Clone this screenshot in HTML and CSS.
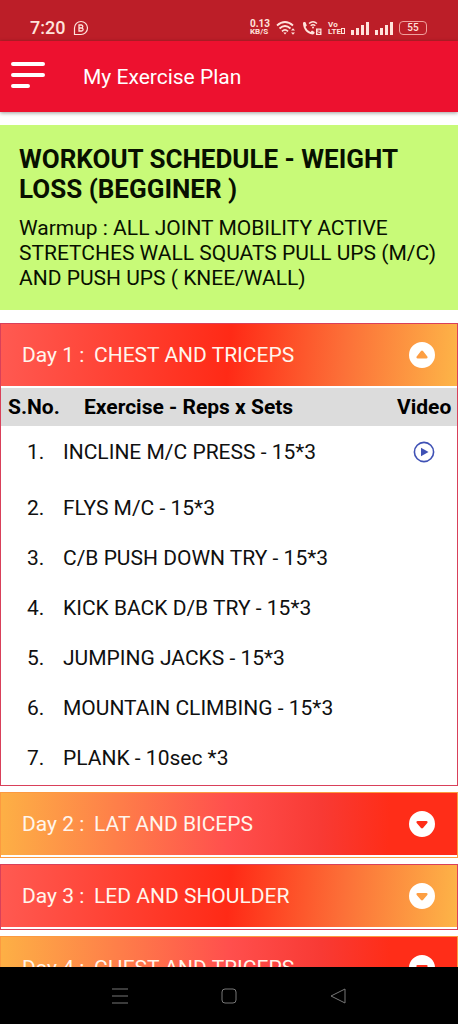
FILE: index.html
```html
<!DOCTYPE html>
<html lang="en">
<head>
    <meta charset="UTF-8">
    <meta name="viewport" content="width=device-width, initial-scale=1.0">
    <title>My Exercise Plan</title>
    <link rel="stylesheet" href="styles.css">
</head>
<body>
    <div class="status-bar">
        <span class="time">7:20</span>
        <svg class="chat-icon" width="16" height="16" viewBox="0 0 16 16" fill="none" stroke="currentColor">
            <path d="M1.5 14.5V8A6.5 6.5 0 1 1 8 14.5Z" stroke-width="1.2"/>
            <path d="M6 5v6h2.600a1.500 1.500 0 0 0 0-3H6h2.300a1.500 1.500 0 0 0 0-3Z" stroke-width="1.300"/>
        </svg>
        <div class="status-right">
            <div class="speed"><span>0.13</span><span>KB/S</span></div>
            <svg width="20" height="16" viewBox="0 0 20 16" fill="none" stroke="currentColor" stroke-width="1.800">
                <path d="M1 5.500Q9 -1.500 17 5.500M3.500 8.500Q9 3.500 14.500 8.500M6 11.300Q9 8.500 12 11.300"/>
                <path d="M7.300 12.600h3.400L9 14.500Z" fill="currentColor" stroke="none"/>
                <path d="M15 10.500l2-2.200 2 2.200ZM15 12.500l2 2.200 2-2.200Z" fill="currentColor" stroke="none"/>
            </svg>
            <svg width="20" height="16" viewBox="0 0 20 16" fill="none" stroke="currentColor">
                <path d="M1 3.500C1 2 2.500 1.800 3.500 2.200L4.800 5.500 3.500 7Q5 10.500 8.500 12L10 10.500 12.500 12C12.800 13.500 12 14.500 10.500 14.500C5 14 1.200 9 1 3.500Z" fill="currentColor" stroke="none"/>
                <path d="M7 3.500Q11 0 15 3.500M8.700 5.800Q11 3.800 13.300 5.800" stroke-width="1.400"/>
                <circle cx="11" cy="7.500" r="1" fill="currentColor" stroke="none"/>
                <path d="M14 8.500h5.500V15H14Z" fill="currentColor" stroke="none"/>
                <path d="M15.500 10.200h2.300v1.600h-2v1.700h2.300" stroke="#bc1e28" stroke-width=".9"/>
            </svg>
            <div class="volte"><span>Vo</span><span>LTE<i></i></span></div>
            <svg class="signal" width="18" height="14" viewBox="0 0 18 14" fill="currentColor">
                <path d="M0 9h3v5H0ZM5 7h3v7H5ZM10 4h3v10h-3ZM15 1h3v13h-3Z"/>
            </svg>
            <svg class="signal" width="18" height="14" viewBox="0 0 18 14" fill="currentColor">
                <path d="M0 9h3v5H0ZM5 7h3v7H5ZM10 4h3v10h-3ZM15 1h3v13h-3Z"/>
            </svg>
            <div class="battery">55</div>
        </div>
    </div>

    <header class="app-bar">
        <button class="menu-button" aria-label="Menu">
            <svg width="34" height="30" viewBox="0 0 34 30" fill="none" stroke="#fff" stroke-width="4" stroke-linecap="round" stroke-linejoin="round">
                <path d="M2 2h30M2 13h30M2 24h15"/>
            </svg>
        </button>
        <h1>My Exercise Plan</h1>
    </header>

    <main class="content">
        <section class="schedule">
            <h2>WORKOUT SCHEDULE - WEIGHT LOSS (BEGGINER )</h2>
            <p>Warmup : ALL JOINT MOBILITY ACTIVE STRETCHES WALL SQUATS PULL UPS (M/C) AND PUSH UPS ( KNEE/WALL)</p>
        </section>

        <section class="day">
            <button class="day-header" aria-expanded="true" aria-controls="day1">
                <span class="day-label">Day 1 :</span>
                <span class="day-name">CHEST AND TRICEPS</span>
                <svg class="arrow" width="26" height="26" viewBox="0 0 26 26" fill="#fff">
                    <path fill-rule="evenodd" d="M13 0a13 13 0 1 1 0 26a13 13 0 1 1 0-26ZM12 9L7.500 14.800Q7 16.500 8.500 16.500H17.500Q19 16.500 18.500 14.800L14 9Q13 8.200 12 9Z"/>
                </svg>
            </button>
            <div class="panel" id="day1">
                <table>
                    <thead>
                        <tr>
                            <th class="number">S.No.</th>
                            <th class="exercise">Exercise - Reps x Sets</th>
                            <th class="video">Video</th>
                        </tr>
                    </thead>
                    <tbody>
                        <tr class="has-video">
                            <td class="number">1.</td>
                            <td>INCLINE M/C PRESS - 15*3</td>
                            <td class="video">
                                <button class="play-button" aria-label="Play video">
                                    <svg width="22" height="22" viewBox="0 0 22 22">
                                        <circle cx="11" cy="11" r="9.600" fill="none" stroke="#3f51b5" stroke-width="1.600"/>
                                        <path d="M8 6.800v8.400L15.500 11Z" fill="#3f51b5"/>
                                    </svg>
                                </button>
                            </td>
                        </tr>
                        <tr><td class="number">2.</td><td>FLYS M/C - 15*3</td><td></td></tr>
                        <tr><td class="number">3.</td><td>C/B PUSH DOWN TRY - 15*3</td><td></td></tr>
                        <tr><td class="number">4.</td><td>KICK BACK D/B TRY - 15*3</td><td></td></tr>
                        <tr><td class="number">5.</td><td>JUMPING JACKS - 15*3</td><td></td></tr>
                        <tr><td class="number">6.</td><td>MOUNTAIN CLIMBING - 15*3</td><td></td></tr>
                        <tr><td class="number">7.</td><td>PLANK - 10sec *3</td><td></td></tr>
                    </tbody>
                </table>
            </div>
        </section>

        <section class="day even">
            <button class="day-header" aria-expanded="false">
                <span class="day-label">Day 2 :</span>
                <span class="day-name">LAT AND BICEPS</span>
                <svg class="arrow" width="26" height="26" viewBox="0 0 26 26" fill="#fff">
                    <path fill-rule="evenodd" d="M13 0a13 13 0 1 1 0 26a13 13 0 1 1 0-26ZM12 17L7.500 11.700Q7 10 8.500 10H17.500Q19 10 18.500 11.700L14 17Q13 17.800 12 17Z"/>
                </svg>
            </button>
        </section>

        <section class="day">
            <button class="day-header" aria-expanded="false">
                <span class="day-label">Day 3 :</span>
                <span class="day-name">LED AND SHOULDER</span>
                <svg class="arrow" width="26" height="26" viewBox="0 0 26 26" fill="#fff">
                    <path fill-rule="evenodd" d="M13 0a13 13 0 1 1 0 26a13 13 0 1 1 0-26ZM12 17L7.500 11.700Q7 10 8.500 10H17.500Q19 10 18.500 11.700L14 17Q13 17.800 12 17Z"/>
                </svg>
            </button>
        </section>

        <section class="day even">
            <button class="day-header" aria-expanded="false">
                <span class="day-label">Day 4 :</span>
                <span class="day-name">CHEST AND TRICEPS</span>
                <svg class="arrow" width="26" height="26" viewBox="0 0 26 26" fill="#fff">
                    <path fill-rule="evenodd" d="M13 0a13 13 0 1 1 0 26a13 13 0 1 1 0-26ZM12 17L7.500 11.700Q7 10 8.500 10H17.500Q19 10 18.500 11.700L14 17Q13 17.800 12 17Z"/>
                </svg>
            </button>
        </section>
    </main>

    <nav class="system-nav">
        <button aria-label="Recent apps">
            <svg width="18" height="18" viewBox="0 0 18 18" fill="none" stroke="currentColor">
                <path d="M1 2h16M1 9h16M1 16h16"/>
            </svg>
        </button>
        <button aria-label="Home">
            <svg width="18" height="18" viewBox="0 0 18 18" fill="none" stroke="currentColor">
                <rect x="2" y="2" width="14" height="14" rx="3"/>
            </svg>
        </button>
        <button aria-label="Back">
            <svg width="18" height="18" viewBox="0 0 18 18" fill="none" stroke="currentColor" stroke-linejoin="round">
                <path d="M16 2v14L2 9Z"/>
            </svg>
        </button>
    </nav>
</body>
</html>
```

FILE: styles.css
```css
/* General styling */
* {
    box-sizing: border-box;
}
body {
    font-family: Roboto, sans-serif;
    display: flex;
    flex-direction: column;
    height: 100vh;
    margin: 0;
    background-color: #fff;
    color: #101010;
    font-size: 21px;
}
button {
    font: inherit;
    color: inherit;
    background: none;
    border: none;
    padding: 0;
    cursor: pointer;
}
svg {
    display: block;
    flex-shrink: 0;
}

/* Phone status bar */
.status-bar {
    display: flex;
    align-items: center;
    padding: 14px 31px 0 30px;
    height: 41px;
    flex-shrink: 0;
    background-color: #bc1e28;
    color: #ffe3dc;
}
.time {
    font-size: 18px;
    font-weight: 500;
}
.chat-icon {
    margin-left: 8px;
}
.status-right {
    display: flex;
    align-items: center;
    gap: 6px;
    margin-left: auto;
}
.speed, .volte {
    display: flex;
    flex-direction: column;
    font-size: 8px;
    line-height: 8px;
    font-weight: 700;
}
.speed span:first-child {
    font-size: 10px;
}
.volte {
    line-height: 7px;
}
.volte i {
    display: inline-block;
    width: 4px;
    height: 6px;
    border: 1px solid;
}
.battery {
    width: 28px;
    height: 14px;
    border: 1px solid #f0a09c;
    border-radius: 4px;
    font-size: 10px;
    line-height: 12px;
    font-weight: 500;
    text-align: center;
}

/* App bar */
.app-bar {
    display: flex;
    align-items: center;
    gap: 38px;
    height: 71px;
    padding: 0 11px;
    flex-shrink: 0;
    background-color: #ed112f;
    color: #fff;
    box-shadow: 0 1px 4px rgba(0, 0, 0, 0.4);
    z-index: 1;
}
.app-bar h1 {
    margin: 0;
    font-size: 21px;
    line-height: 24px;
    font-weight: 400;
}

.content {
    flex: 1;
    min-height: 0;
    overflow: hidden auto;
    padding-top: 13px;
    scrollbar-width: none;
}

/* Schedule summary */
.schedule {
    padding: 19px;
    margin-bottom: 13px;
    background-color: #c8fa78;
    color: #081000;
}
.schedule h2 {
    margin: 0 0 12px;
    font-size: 26px;
    line-height: 30px;
    font-weight: 700;
}
.schedule p {
    margin: 0;
    line-height: 25px;
}

/* Day cards */
.day {
    border: 1px solid #d9405a;
    padding-bottom: 2px;
    margin-bottom: 6px;
}
.day.even {
    border-color: #fc9a40;
}
.day-header {
    display: flex;
    align-items: center;
    width: 100%;
    height: 62px;
    padding: 0 22px 0 21px;
    color: #fff5ec;
    text-align: left;
    background: linear-gradient(95deg, #ff5a52, #ff2a16 50%, #fc7038 75%, #fdb548);
}
.even .day-header {
    background: linear-gradient(92deg, #fdb045, #ff4f4d 50%, #f83a34 70%, #ff2d18 85%);
}
.day-label {
    min-width: 72px;
}
.arrow {
    margin-left: auto;
}

/* Exercise table */
.panel {
    padding-top: 2px;
}
table {
    width: 100%;
    border-collapse: collapse;
    table-layout: fixed;
}
th {
    height: 38px;
    padding: 0;
    background-color: #dcdcdc;
    color: #000;
    font-weight: 700;
    text-align: left;
}
td {
    height: 50px;
    padding: 0;
}
th.number {
    width: 62px;
    padding-left: 7px;
}
th.exercise {
    padding-left: 21px;
}
th.video {
    width: 66px;
    padding-left: 6px;
}
td.number {
    padding-left: 26px;
}
td.video {
    padding-left: 22px;
}
.has-video td {
    height: 57px;
    padding-bottom: 6px;
}
.play-button {
    display: block;
}

/* Bottom navigation */
.system-nav {
    display: flex;
    justify-content: center;
    align-items: center;
    gap: 91px;
    height: 57px;
    flex-shrink: 0;
    background-color: #000;
    color: #777;
}
```
